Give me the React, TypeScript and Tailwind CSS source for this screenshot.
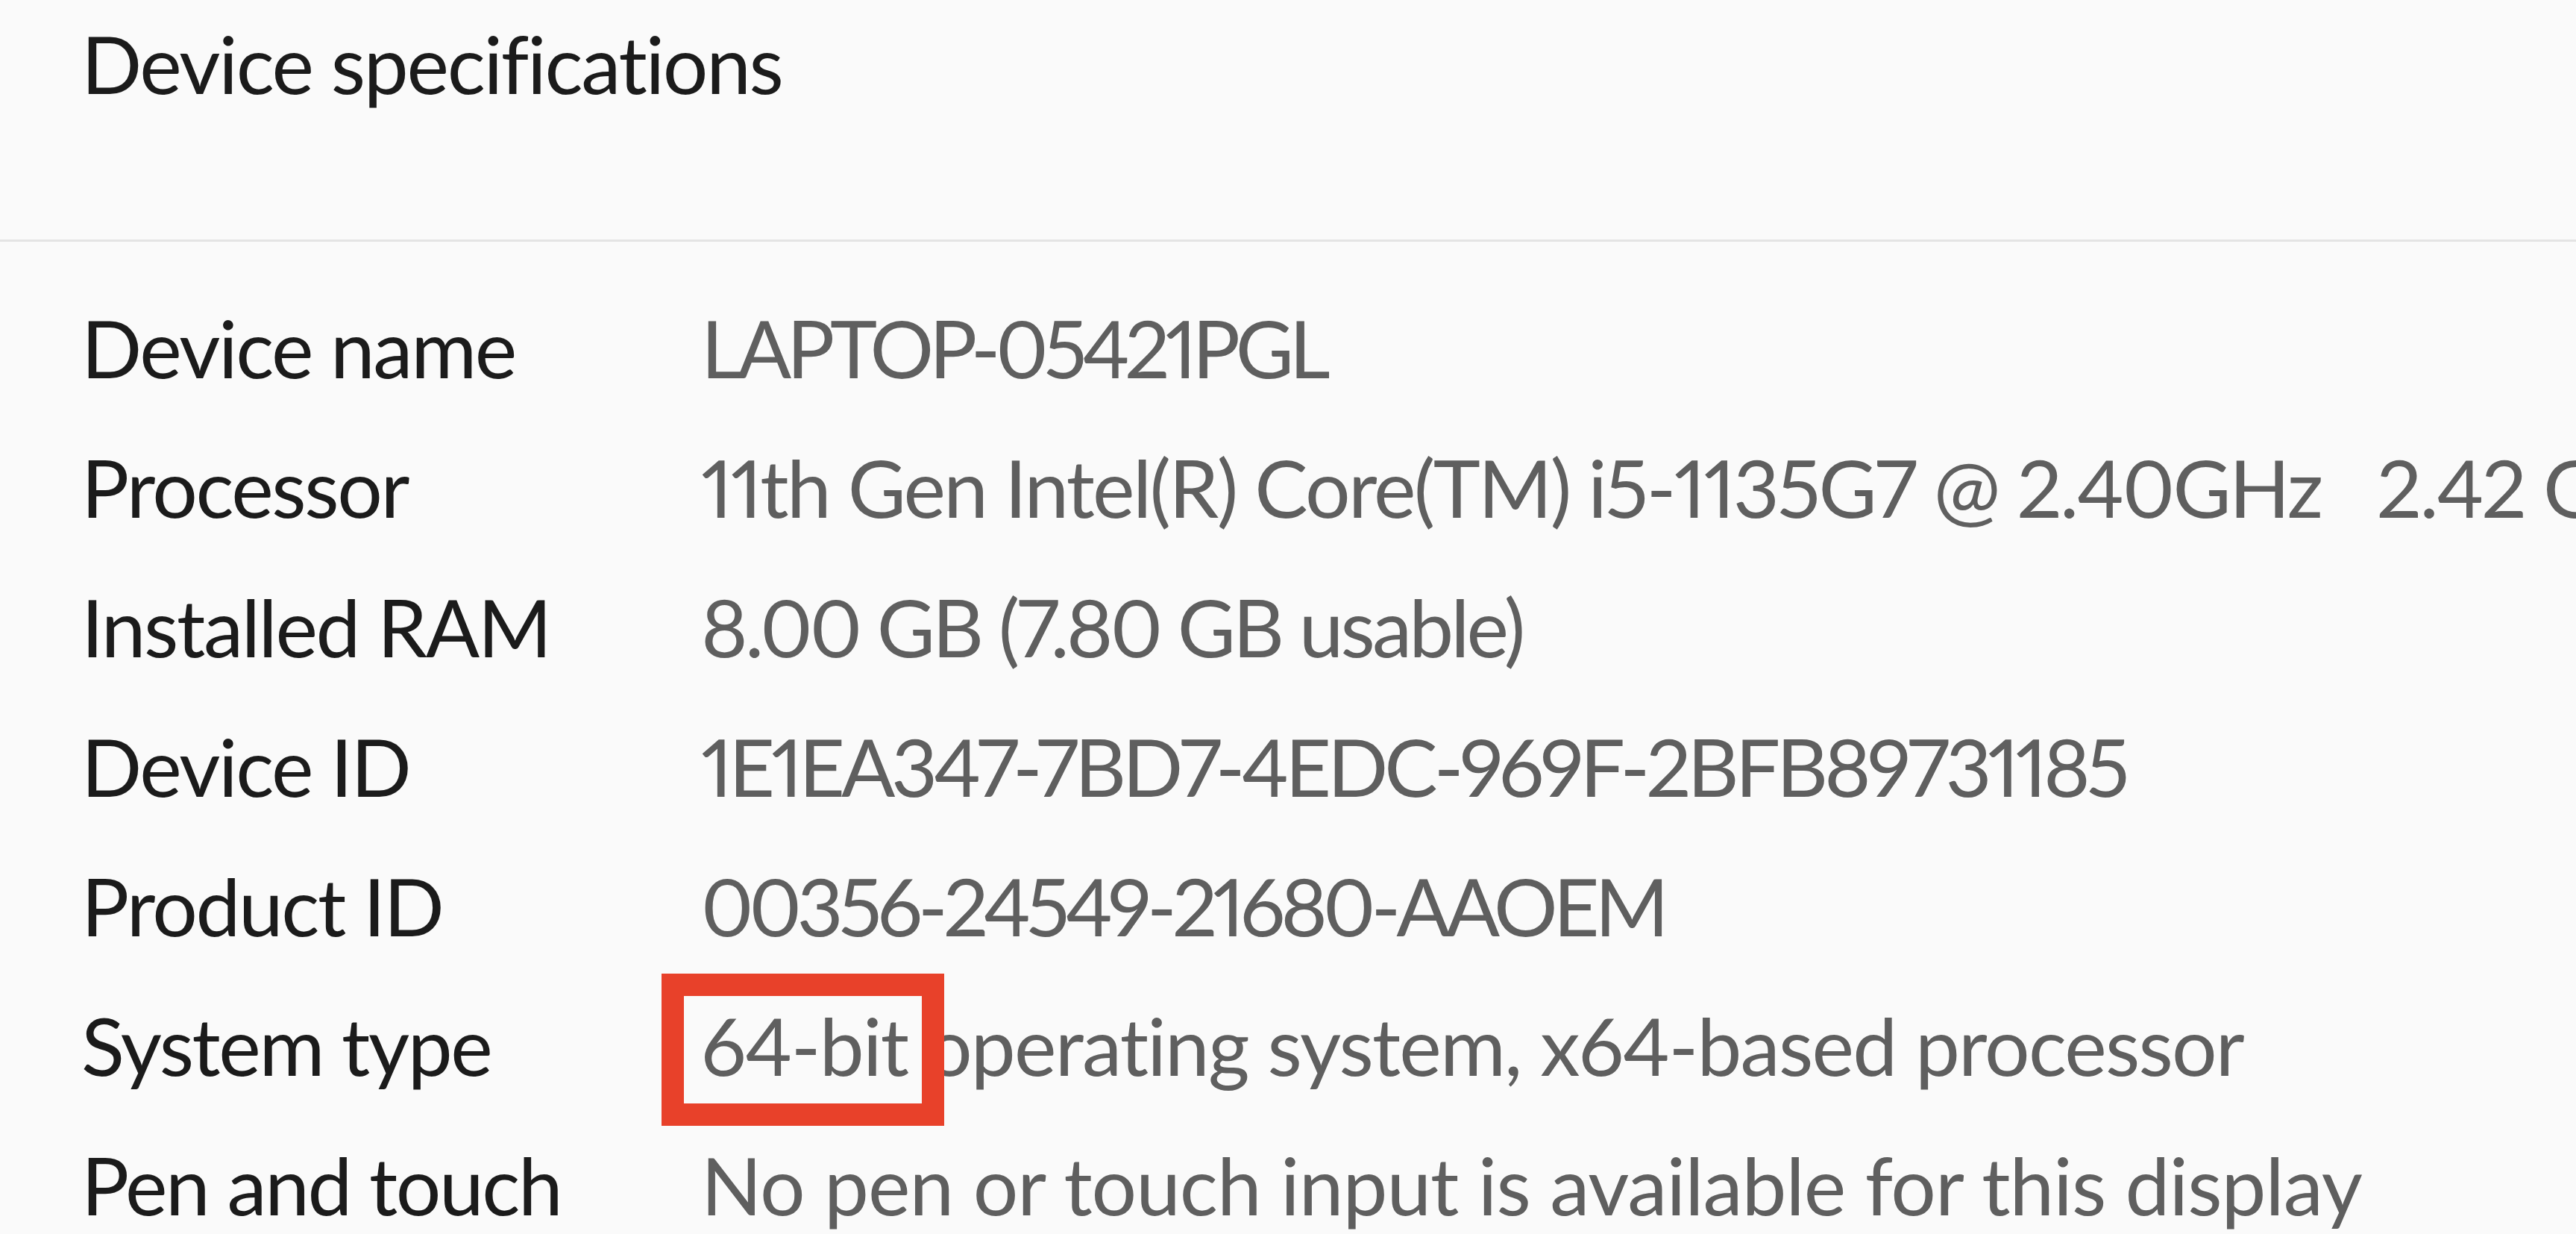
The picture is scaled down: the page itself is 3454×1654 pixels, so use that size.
// tracking per value row, tuned so line lengths match the Segoe UI original
const specs: { label: string; value: string; tracking: string; highlight?: boolean }[] = [
  { label: 'Device name', value: 'LAPTOP-05421PGL', tracking: 'tracking-[-6.2px]' },
  { label: 'Processor', value: '11th Gen Intel(R) Core(TM) i5-1135G7 @ 2.40GHz   2.42 GHz', tracking: 'tracking-[-2.7px]' },
  { label: 'Installed RAM', value: '8.00 GB (7.80 GB usable)', tracking: 'tracking-[-3.9px]' },
  { label: 'Device ID', value: '1E1EA347-7BD7-4EDC-969F-2BFB89731185', tracking: 'tracking-[-5.1px]' },
  { label: 'Product ID', value: '00356-24549-21680-AAOEM', tracking: 'tracking-[-6px]' },
  { label: 'System type', value: '64-bit operating system, x64-based processor', tracking: 'tracking-[-1.8px]', highlight: true },
  { label: 'Pen and touch', value: 'No pen or touch input is available for this display', tracking: 'tracking-[-1px]' },
]

export default function App() {
  return (
    <div className="w-[3454px] h-[1654px] overflow-hidden bg-[#fafafa] font-['Lato','Noto_Sans',sans-serif] text-[107px] proportional-nums">
      <div className="h-[321px] pt-[31px] pl-[109px]">
        <h2 className="leading-none font-normal text-[#1b1b1b] tracking-[-2.3px] whitespace-nowrap">Device specifications</h2>
      </div>
      <div className="h-[3px] bg-[#e4e4e4]" />

      <div className="pt-[48px] pl-[109px] flex flex-col">
        {specs.map((s) => (
          <div key={s.label} className="flex h-[187px] leading-[187px] whitespace-pre">
            <div className="w-[831px] shrink-0 text-[#1b1b1b] tracking-[-2.4px]">{s.label}</div>
            <div className={`relative text-[#5f5f5f] ${s.tracking}`}>
              {s.value}
              {s.highlight && (
                <span className="absolute -left-[53px] -top-[2px] w-[379px] h-[204px] border-[30px] border-[#e8412a]" />
              )}
            </div>
          </div>
        ))}
      </div>
    </div>
  )
}
